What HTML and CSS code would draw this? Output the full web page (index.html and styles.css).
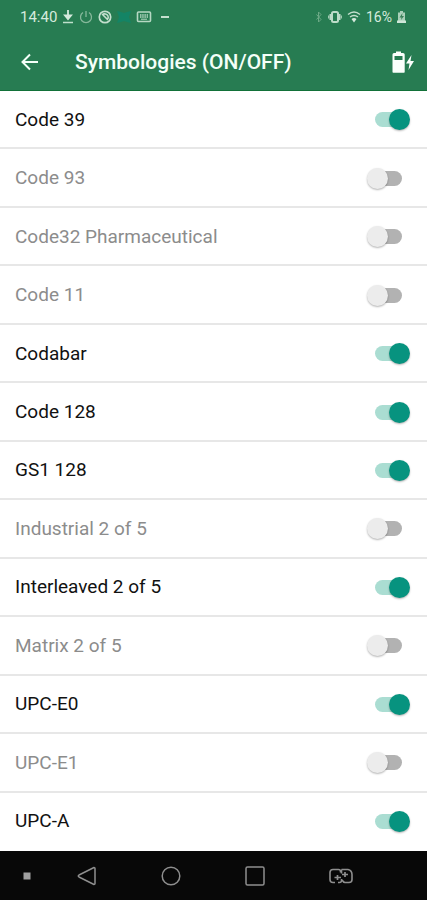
FILE: index.html
```html
<!DOCTYPE html>
<html lang="en">
<head>
<meta charset="utf-8">
<meta name="viewport" content="width=device-width, initial-scale=1">
<title>Symbologies</title>
<link rel="stylesheet" href="styles.css">
</head>
<body>
<div class="screen">
  <header class="header">
    <div class="status">
      <div class="status-group">
        <span class="time">14:40</span>
        <svg width="12" height="16" viewBox="0 0 12 16" aria-hidden="true"><path d="M6 1v8M3 6.500l3 3.500 3-3.500z" fill="#d5eadd" stroke="#d5eadd" stroke-width="1.800"/><path d="M1 13.500h10" stroke="#bfe0cc" stroke-width="1.500"/></svg>
        <svg width="14" height="16" viewBox="0 0 14 16" fill="none" stroke="#86b89b" stroke-width="1.300" aria-hidden="true"><path d="M4 3.500a5.500 5.500 0 1 0 6 0M7 2v6"/></svg>
        <svg width="14" height="16" viewBox="0 0 14 16" fill="none" stroke="#c3dfce" aria-hidden="true"><circle cx="7" cy="8" r="5.700" stroke-width="1.700"/><path d="M4 6c2-2 5-1 6 1s0 3-1 4M5 6l4 4" stroke-width="1.600"/></svg>
        <svg width="14" height="16" viewBox="0 0 14 16" aria-hidden="true"><path d="M0 2l4 1 3 1 3-1 4-1-2 6 2 6-4-1-3-1-3 1-4 1 2-6z" fill="#148465"/></svg>
        <svg class="keyboard" width="16" height="16" viewBox="0 0 16 16" fill="none" stroke="#b6d8c3" aria-hidden="true"><rect x="1.500" y="3" width="13" height="9.500" rx="1" stroke-width="1.600"/><path d="M4 6h8M4 8h8" stroke-dasharray="1.500 .7" stroke-width="1.300"/><path d="M5 10.200h6"/></svg>
        <svg width="8" height="16" viewBox="0 0 8 16" aria-hidden="true"><path d="M0 8h8" stroke="#c4dfce" stroke-width="2"/></svg>
      </div>
      <div class="status-group">
        <svg width="8" height="16" viewBox="0 0 8 16" fill="none" stroke="#6ca986" aria-hidden="true"><path d="M1.500 5.500l4.500 5-2.500 2.500V3L6 5.500l-4.500 5"/></svg>
        <svg width="14" height="16" viewBox="0 0 14 16" fill="none" stroke="#bddcc9" aria-hidden="true"><rect x="4" y="3" width="6" height="10" rx="1.500" stroke-width="2"/><path d="M2.300 5v6M11.700 5v6" stroke-width="1.600"/><path d="M.7 6.500v3M13.300 6.500v3"/></svg>
        <svg width="14" height="16" viewBox="0 0 14 16" fill="none" stroke="#c4dfce" stroke-width="1.400" aria-hidden="true"><path d="M1 5.500q6-5 12 0M3 8q4-3 8 0"/><path d="M4.500 10q2.500-2 5 0L7 13.500z" fill="#d5eadd" stroke="none"/></svg>
        <span>16%</span>
        <svg width="9" height="16" viewBox="0 0 9 16" aria-hidden="true"><path d="M3 2h3v1.500h2V14H1V3.500h2z" fill="#a9cfb8"/><path d="M5.500 4L2.500 8.500h2L4 11l3-4H5z" fill="#397f57"/><path d="M0 11.500h9V14H0z" fill="#cfe6d8"/></svg>
      </div>
    </div>
    <div class="toolbar">
      <button type="button" aria-label="Back"><svg width="18" height="18" viewBox="0 0 18 18" fill="none" stroke="#f4fff8" stroke-width="2"><path d="M17 9H2M9 1.500L1.500 9 9 16.500"/></svg></button>
      <h1 class="title">Symbologies (ON/OFF)</h1>
      <svg width="22" height="22" viewBox="0 0 22 22" aria-hidden="true"><path fill-rule="evenodd" d="M4 .5h5V2h2q1.700 0 1.700 1.500V21q0 .7-.7.700H1.200Q.5 21.700.5 21V3.500Q.5 2 2 2h2zM2.500 5v4h8V5z" fill="#fbfffc"/><path d="M19.500 4l-5.500 8.500h3.500L16.500 19 22 10h-3.500z" fill="#fbfffc"/></svg>
    </div>
  </header>
  <main class="list">
    <label class="row"><span>Code 39</span><input class="switch" type="checkbox" checked></label>
    <label class="row off"><span>Code 93</span><input class="switch" type="checkbox"></label>
    <label class="row off"><span>Code32 Pharmaceutical</span><input class="switch" type="checkbox"></label>
    <label class="row off"><span>Code 11</span><input class="switch" type="checkbox"></label>
    <label class="row"><span>Codabar</span><input class="switch" type="checkbox" checked></label>
    <label class="row"><span>Code 128</span><input class="switch" type="checkbox" checked></label>
    <label class="row"><span>GS1 128</span><input class="switch" type="checkbox" checked></label>
    <label class="row off"><span>Industrial 2 of 5</span><input class="switch" type="checkbox"></label>
    <label class="row"><span>Interleaved 2 of 5</span><input class="switch" type="checkbox" checked></label>
    <label class="row off"><span>Matrix 2 of 5</span><input class="switch" type="checkbox"></label>
    <label class="row"><span>UPC-E0</span><input class="switch" type="checkbox" checked></label>
    <label class="row off"><span>UPC-E1</span><input class="switch" type="checkbox"></label>
    <label class="row"><span>UPC-A</span><input class="switch" type="checkbox" checked></label>
  </main>
  <nav class="navbar" aria-label="System">
    <button type="button" aria-label="Pin"><svg width="8" height="8" viewBox="0 0 8 8"><path d="M.5.500h7v7h-7z" fill="#a0a0a0"/></svg></button>
    <div class="nav-keys">
      <button type="button" aria-label="Back"><svg width="20" height="20" viewBox="0 0 20 20" fill="none" stroke="#8e8e8e" stroke-width="1.500" stroke-linejoin="round"><path d="M17 1.500q1 0 1 1v15q0 1-1 1L2 11q-1.500-1 0-2z"/></svg></button>
      <button type="button" aria-label="Home"><svg width="20" height="20" viewBox="0 0 20 20" fill="none" stroke="#8e8e8e" stroke-width="1.500"><circle cx="10" cy="10" r="8.800"/></svg></button>
      <button type="button" aria-label="Recents"><svg width="20" height="20" viewBox="0 0 20 20" fill="none" stroke="#8e8e8e" stroke-width="1.500"><rect x="1" y="1" width="18" height="18" rx="1.500"/></svg></button>
      <button type="button" aria-label="Switch apps"><svg width="24" height="16" viewBox="0 0 24 16" fill="none" stroke="#8e8e8e" stroke-width="1.600"><path d="M11.500 4.500V3.500Q11.500 1.500 9.500 1.500H4Q1 1.500 1 4.500v7q0 3 3 3h2M9 14.500h1.500q2 0 2-2V11"/><path d="M12.500 1.500h6.500q4 1 4 5v5q0 3-3 3h-4q-1.500 0-3-2.500M12.500 1.500v4"/><path d="M5.500 9.500h6.500M8.500 7v5M13 6.500h6M16 4v5" stroke-width="1.700"/></svg></button>
    </div>
  </nav>
</div>
</body>
</html>
```
FILE: styles.css
```css
* {
  box-sizing: border-box;
}

body {
  margin: 0;
  font-family: Roboto, "Liberation Sans", sans-serif;
}

button {
  display: flex;
  padding: 0;
  border: 0;
  background: none;
}

svg {
  display: block;
  flex: none;
}

.screen {
  display: flex;
  flex-direction: column;
  min-height: 100vh;
}

.header {
  background: #277c52;
  border-bottom: 1px solid #127139;
  color: #f4fff8;
}

.status {
  display: flex;
  justify-content: space-between;
  height: 34px;
  padding: 0 21px 0 20px;
  font-size: 14px;
  color: #d5eadd;
}

.status-group {
  display: flex;
  align-items: center;
  gap: 5px;
}

.time {
  font-size: 15px;
}

.keyboard {
  margin-right: 4px;
}

.toolbar {
  display: flex;
  align-items: center;
  height: 56px;
  padding: 0 13px 0 21px;
}

.title {
  flex: 1;
  margin: 0 0 0 36px;
  font-size: 21px;
  font-weight: 500;
  line-height: 28px;
}

.list {
  flex: 1;
  display: grid;
  grid-auto-rows: 1fr;
  background: #fff;
}

.row {
  display: flex;
  align-items: center;
  justify-content: space-between;
  min-height: 48px;
  padding: 1px 17px 0 15px;
  border-bottom: 2px solid #e7e7e7;
  font-size: 19px;
  line-height: 24px;
  color: #111;
}

.row:last-child {
  border-bottom-color: #fff;
}

.off {
  color: #8c8c8c;
}

.switch {
  appearance: none;
  position: relative;
  display: flex;
  align-items: center;
  width: 43px;
  height: 21px;
  margin: 0;
  padding: 0 8px;
}

.switch::before {
  content: "";
  width: 27px;
  height: 15px;
  border-radius: 8px;
  background: #b2b2b2;
}

.switch::after {
  content: "";
  position: absolute;
  left: 0;
  top: 0;
  width: 21px;
  height: 21px;
  border-radius: 50%;
  background: #ececec;
  box-shadow: 0 1px 2px rgba(0, 0, 0, 0.3);
}

.switch:checked::before {
  background: #aaddd2;
}

.switch:checked::after {
  left: auto;
  right: 0;
  background: #07937f;
}

.navbar {
  display: flex;
  align-items: center;
  gap: 46px;
  height: 49px;
  padding: 0 74px 0 23px;
  background: #080808;
}

.nav-keys {
  flex: 1;
  display: flex;
  align-items: center;
  justify-content: space-between;
}
```
